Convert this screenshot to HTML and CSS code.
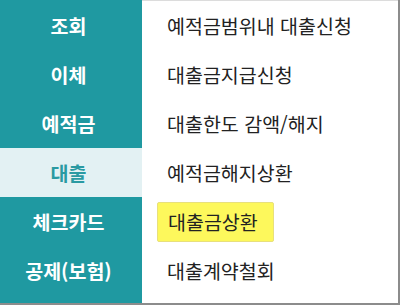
FILE: index.html
```html
<!DOCTYPE html>
<html lang="ko">
<head>
<meta charset="utf-8">
<link rel="stylesheet" href="styles.css">
</head>
<body>
<div class="menu">
  <ul class="side">
    <li class="side-item">조회</li>
    <li class="side-item">이체</li>
    <li class="side-item">예적금</li>
    <li class="side-item active">대출</li>
    <li class="side-item">체크카드</li>
    <li class="side-item">공제(보험)</li>
  </ul>
  <ul class="sub">
    <li class="sub-item"><span class="label">예적금범위내 대출신청</span></li>
    <li class="sub-item"><span class="label">대출금지급신청</span></li>
    <li class="sub-item"><span class="label">대출한도 감액/해지</span></li>
    <li class="sub-item"><span class="label">예적금해지상환</span></li>
    <li class="sub-item"><span class="label highlight">대출금상환</span></li>
    <li class="sub-item"><span class="label">대출계약철회</span></li>
  </ul>
</div>
</body>
</html>
```

FILE: styles.css
```css
html, body {
  margin: 0;
  padding: 0;
  background: #ffffff;
}
body {
  font-family: "Noto Sans CJK KR", "Noto Sans", sans-serif;
}
.menu {
  display: flex;
  width: 400px;
  height: 305px;
  box-sizing: border-box;
  border-right: 2px solid #8c8c8c;
  border-bottom: 2px solid #8c8c8c;
}
.side, .sub {
  list-style: none;
  margin: 0;
  padding: 0;
}
.side {
  width: 142px;
  flex: none;
  background: #1f99a1;
  padding-top: 1px;
}
.side-item {
  height: 49px;
  display: flex;
  align-items: center;
  justify-content: center;
  padding-right: 5px;
  color: #ffffff;
  font-weight: 700;
  font-size: 19.5px;
}
.side-item.active {
  background: #e3f1f3;
  color: #2a9aa2;
}
.sub {
  flex: 1;
  padding-top: 0;
  border-top: 1px solid #dcdcdc;
}
.sub-item {
  height: 49px;
  display: flex;
  align-items: center;
  padding-left: 15px;
  font-size: 19.5px;
  color: #222222;
}
.label {
  padding-left: 10px;
}
.highlight {
  display: flex;
  align-items: center;
  box-sizing: border-box;
  width: 117px;
  height: 40px;
  background: #fdf85c;
  border: 1px solid #e8e07c;
  border-radius: 2px;
  padding-left: 10px;
}
```
